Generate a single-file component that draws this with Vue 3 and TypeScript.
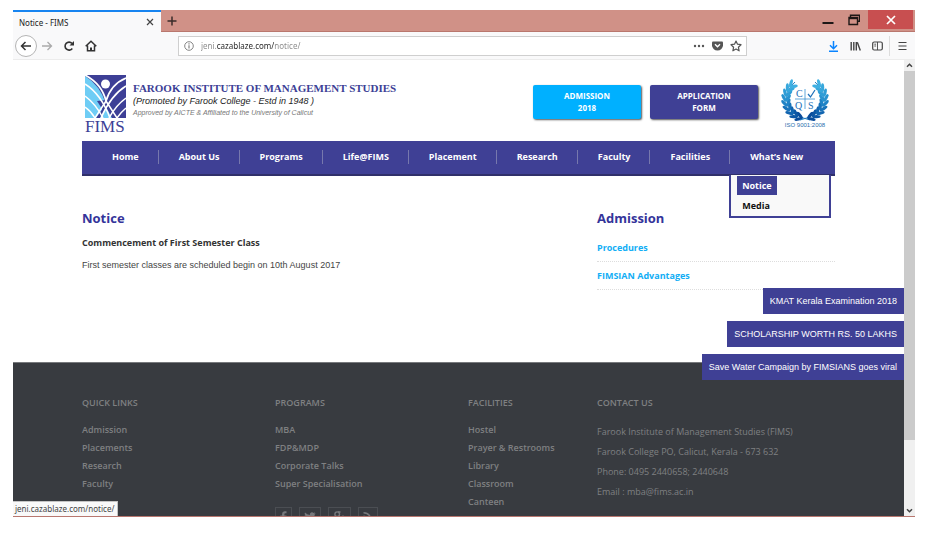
<script setup lang="ts">
import { ref } from 'vue'

interface Leaf { x: number; y: number; r: number; fill: string }

const address = ref('jeni.cazablaze.com/notice/')

const navItems: string[] = ['Home', 'About Us', 'Programs', 'Life@FIMS', 'Placement', 'Research', 'Faculty', 'Facilities']

const footerColumns = [
  { title: 'QUICK LINKS', links: ['Admission', 'Placements', 'Research', 'Faculty'] },
  { title: 'PROGRAMS', links: ['MBA', 'FDP&MDP', 'Corporate Talks', 'Super Specialisation'] },
  { title: 'FACILITIES', links: ['Hostel', 'Prayer & Restrooms', 'Library', 'Classroom', 'Canteen'] },
]

const contactLines: string[] = [
  'Farook Institute of Management Studies (FIMS)',
  'Farook College PO, Calicut, Kerala - 673 632',
  'Phone: 0495 2440658; 2440648',
  'Email : mba@fims.ac.in',
]

const banners: string[] = [
  'KMAT Kerala Examination 2018',
  'SCHOLARSHIP WORTH RS. 50 LAKHS',
  'Save Water Campaign by FIMSIANS goes viral',
]

// Laurel leaves along one side of the wreath, from the foot up to the tip.
const shades = ['#0a4c9b', '#0d57a5', '#1265b0', '#1873ba', '#1f83c6', '#2893d0', '#2f9dd6', '#37a7dc', '#3fb0e2']
const leaves: Leaf[] = []
for (let i = 0; i < 9; i++) {
  const deg = 108 + i * 15
  const a = (deg * Math.PI) / 180
  for (const side of [-1, 1]) {
    const radius = 19 + side * 2
    leaves.push({
      x: 24 + radius * Math.cos(a),
      y: 21 + radius * Math.sin(a),
      r: deg + 90 - side * 32,
      fill: shades[i],
    })
  }
}
</script>

<template>
  <div class="screen">
    <div class="window">
      <div class="titlebar">
        <div class="tab">
          <span>Notice - FIMS</span>
          <button class="icon-btn" aria-label="Close tab">
            <svg width="8" height="8" viewBox="0 0 8 8"><path d="M1 1l6 6M7 1L1 7" stroke="#444" stroke-width="1.2" /></svg>
          </button>
        </div>
        <button class="icon-btn new-tab" aria-label="New tab">
          <svg width="10" height="10" viewBox="0 0 10 10"><path d="M5 0.500v9M0.500 5h9" stroke="#3a2b2a" stroke-width="1.500" /></svg>
        </button>
        <div class="window-controls">
          <button class="icon-btn control" aria-label="Minimize">
            <svg width="12" height="12" viewBox="0 0 12 12"><path d="M0.500 9h11" stroke="#1d1716" stroke-width="2" /></svg>
          </button>
          <button class="icon-btn control" aria-label="Restore">
            <svg width="12" height="12" viewBox="0 0 12 12" fill="none" stroke="#1d1716"><path d="M2.500 3V1.200h9v6H9.500" stroke-width="1.400" /><path d="M1 3.500h8.500v7H1z" stroke-width="1.400" /><path d="M1 4.200h8.500" stroke-width="2" /></svg>
          </button>
          <button class="icon-btn close" aria-label="Close">
            <svg width="10" height="10" viewBox="0 0 10 10"><path d="M1 1l8 8M9 1L1 9" stroke="#fff" stroke-width="1.700" /></svg>
          </button>
        </div>
      </div>

      <div class="toolbar">
        <div class="nav-buttons">
          <button class="icon-btn back" aria-label="Back">
            <svg width="12" height="12" viewBox="0 0 12 12" fill="none" stroke="#333" stroke-width="1.500"><path d="M11 6H1.500M5.500 2l-4 4 4 4" /></svg>
          </button>
          <button class="icon-btn" aria-label="Forward">
            <svg width="12" height="12" viewBox="0 0 12 12" fill="none" stroke="#aaa" stroke-width="1.300"><path d="M1 6h9.500M6.500 2l4 4-4 4" /></svg>
          </button>
          <button class="icon-btn" aria-label="Reload">
            <svg width="12" height="12" viewBox="0 0 12 12"><path d="M9.300 8.500A4 4 0 1 1 9 3.400" fill="none" stroke="#333" stroke-width="1.600" /><path d="M11 1v4.500H6.500z" fill="#333" /></svg>
          </button>
          <button class="icon-btn" aria-label="Home">
            <svg width="12" height="12" viewBox="0 0 12 12" fill="none" stroke="#333" stroke-width="1.500"><path d="M0.700 6.300L6 1.200l5.300 5.100M2.500 5.500v5.300h7V5.500" /><path d="M6 11V7.500" stroke-width="2" /></svg>
          </button>
        </div>
        <div class="address">
          <svg width="10" height="10" viewBox="0 0 10 10" fill="none" stroke="#777"><circle cx="5" cy="5" r="4.300" stroke-width="0.900" /><path d="M5 4.300v3.200M5 2.300v1.100" stroke-width="1.100" /></svg>
          <input v-model="address" type="text" aria-label="Address" spellcheck="false" />
          <button class="icon-btn" aria-label="Page actions">
            <svg width="12" height="4" viewBox="0 0 12 4" fill="#555"><circle cx="2" cy="2" r="1.200" /><circle cx="6" cy="2" r="1.200" /><circle cx="10" cy="2" r="1.200" /></svg>
          </button>
          <button class="icon-btn" aria-label="Save to Pocket">
            <svg width="11" height="10" viewBox="0 0 11 10"><path d="M1 0.500h9q1 0 1 1v2.700a5.500 5.300 0 0 1-11 0V1.500q0-1 1-1z" fill="#555" /><path d="M3 3.300l2.500 2.500L8 3.300" fill="none" stroke="#fff" stroke-width="1.400" /></svg>
          </button>
          <button class="icon-btn" aria-label="Bookmark">
            <svg width="12" height="12" viewBox="0 0 12 12"><path d="M6 1l1.500 3.200 3.500.5-2.600 2.500.7 3.600L6 9l-3.100 1.800.7-3.600L1 4.700l3.500-.5z" fill="none" stroke="#555" stroke-width="1.200" stroke-linejoin="round" /></svg>
          </button>
        </div>
        <div class="tools">
          <button class="icon-btn" aria-label="Downloads">
            <svg width="11" height="12" viewBox="0 0 11 12" fill="none" stroke="#0a84ff" stroke-width="1.500"><path d="M5.500 1v7.500M2 5.200l3.500 3.500L9 5.200M1 11.200h9" /></svg>
          </button>
          <button class="icon-btn" aria-label="Library">
            <svg width="11" height="12" viewBox="0 0 11 12" fill="none" stroke="#444" stroke-width="1.400"><path d="M1.200 2v8.500M3.800 2v8.500M6.300 2v8.500M7.300 2.200l3 8.300" /></svg>
          </button>
          <button class="icon-btn" aria-label="Sidebars">
            <svg width="11" height="12" viewBox="0 0 11 12" fill="none" stroke="#444"><rect x="0.700" y="2" width="9.600" height="8" rx="1.500" stroke-width="1.200" /><path d="M5.500 2v8M2.300 4.200h1.800M2.300 6h1.800" stroke-width="0.900" /></svg>
          </button>
          <span class="divider"></span>
          <button class="icon-btn" aria-label="Open menu">
            <svg width="9" height="12" viewBox="0 0 9 12" stroke="#444" stroke-width="1.200"><path d="M0.500 2.500h8M0.500 6h8M0.500 9.500h8" /></svg>
          </button>
        </div>
      </div>

      <div class="viewport">
        <div class="page">
          <header class="site-header">
            <a href="#" class="logo" aria-label="FIMS">
              <svg width="41" height="43" viewBox="0 0 41 43">
                <rect width="41" height="43" fill="#3d3f96" />
                <path d="M0 1Q15 10 21 29L11 43H0z" fill="#6fcdf5" />
                <path d="M23 43L12 26l9-1 10 18z" fill="#3d3f96" />
                <path d="M15 43l6-11 6 11z" fill="#6fcdf5" />
                <circle cx="20.500" cy="9" r="4.500" fill="#fff" />
                <g fill="none" stroke="#fff" stroke-width="1.500">
                  <path d="M0 0Q17 9 21 26 26 9 41 3" stroke-width="1.700" />
                  <path d="M0 9Q16 19 25 43M0 21Q11 29 18 43M0 32q6 4 10 11" />
                  <path d="M41 11Q26 20 16 43M41 23Q31 30 24 43M41 33q-5 4-9 10" />
                  <path d="M21 26L32 43M21 26L10 43" />
                </g>
              </svg>
              <span>FIMS</span>
            </a>
            <div class="brand">
              <h1>FAROOK INSTITUTE OF MANAGEMENT STUDIES</h1>
              <p class="promoted">(Promoted by Farook College - Estd in 1948 )</p>
              <p class="approved">Approved by AICTE &amp; Affiliated to the University of Calicut</p>
            </div>
            <div class="actions">
              <a href="#" class="cta cta-light">ADMISSION<br />2018</a>
              <a href="#" class="cta">APPLICATION<br />FORM</a>
              <svg class="seal" width="48" height="51" viewBox="0 0 48 51" role="img" aria-label="ISO 9001:2008">
                <g v-for="side in [1, -1]" :key="side" :transform="side === 1 ? '' : 'translate(48 0) scale(-1 1)'">
                  <path d="M29 42Q8 38 5.500 21 6 11 14 4" fill="none" stroke="#1f7fc3" stroke-width="1" />
                  <ellipse
                    v-for="(leaf, i) in leaves"
                    :key="i"
                    rx="4.200"
                    ry="1.600"
                    :fill="leaf.fill"
                    :transform="`translate(${leaf.x} ${leaf.y}) rotate(${leaf.r})`"
                  />
                </g>
                <path d="M24 11v20M14 21h20" stroke="#3a93d0" stroke-width="0.800" />
                <g class="seal-letters"><text x="15" y="19">C</text><text x="14" y="31">Q</text><text x="27" y="31">S</text></g>
                <path d="M27 16l2.500 3 4.500-7" fill="none" stroke="#1b6fb8" stroke-width="1.200" />
                <text x="24" y="49" class="seal-caption">ISO 9001:2008</text>
              </svg>
            </div>
          </header>

          <nav class="site-nav" aria-label="Main">
            <ul class="menu">
              <li v-for="item in navItems" :key="item"><a href="#">{{ item }}</a></li>
              <li>
                <a href="#">What’s New</a>
                <ul class="dropdown">
                  <li><a href="#" class="active">Notice</a></li>
                  <li><a href="#">Media</a></li>
                </ul>
              </li>
            </ul>
          </nav>

          <main class="content">
            <article>
              <h2>Notice</h2>
              <h3>Commencement of First Semester Class</h3>
              <p>First semester classes are scheduled begin on 10th August 2017</p>
            </article>
            <aside>
              <h2>Admission</h2>
              <ul class="side-links">
                <li><a href="#">Procedures</a></li>
                <li><a href="#">FIMSIAN Advantages</a></li>
              </ul>
            </aside>
          </main>

          <footer class="site-footer">
            <section v-for="col in footerColumns" :key="col.title">
              <h4>{{ col.title }}</h4>
              <ul class="footer-links">
                <li v-for="link in col.links" :key="link"><a href="#">{{ link }}</a></li>
              </ul>
              <div v-if="col.title === 'PROGRAMS'" class="social">
                <a href="#" aria-label="Facebook"><svg width="7" height="12" viewBox="0 0 7 12"><path d="M6.500 0.300v2H5.200q-.8 0-.8.8v1.400h2.100l-.3 2.100H4.400V12H2.100V6.600H.3V4.500h1.800V2.800Q2.100.3 4.600.2z" /></svg></a>
                <a href="#" aria-label="Twitter"><svg width="12" height="12" viewBox="0 0 12 12"><path d="M11.800 2.500l-1.200 1.200Q10.500 8.500 7 10 3.200 11.500.2 9.600q2.100.1 3.400-1Q1.900 8.300 1.400 6.900h1Q.7 6.300.6 4.500l1 .3Q.1 3.300 1 1.600q2 2.300 4.900 2.400Q5.600 1.800 7.600 1.200q1.200-.2 2.100.7l1.500-.6-1 1.400z" /></svg></a>
                <a href="#" aria-label="Google Plus"><svg width="13" height="12" viewBox="0 0 13 12" fill="none"><g class="stroked"><circle cx="4.200" cy="3.200" r="2.300" /><path d="M5 1h2.500M4 5.500q0 1 1.500 1.600 2 1.200.8 2.900Q4 12 1.300 10.500 0 8 4.500 7.500M10 4.500v4.600M7.700 6.800h4.600" /></g></svg></a>
                <a href="#" aria-label="RSS feed"><svg width="10" height="12" viewBox="0 0 10 12"><circle cx="1.700" cy="9.800" r="1.400" /><path class="stroked" d="M0.500 5.200q4 0 4.200 5.800M0.500 1.700q7.400.2 7.800 9.300" /></svg></a>
              </div>
            </section>
            <section>
              <h4>CONTACT US</h4>
              <address>
                <p v-for="line in contactLines" :key="line">{{ line }}</p>
              </address>
            </section>
          </footer>

          <div class="banners">
            <a v-for="banner in banners" :key="banner" href="#">{{ banner }}</a>
          </div>
          <div class="status">jeni.cazablaze.com/notice/</div>
        </div>

        <div class="scrollbar">
          <svg width="11" height="11" viewBox="0 0 11 11"><path d="M3 6.800l2.500-2.500L8 6.800" fill="none" stroke="#444" stroke-width="1.500" /></svg>
          <div class="track"><div class="thumb"></div></div>
          <svg width="11" height="11" viewBox="0 0 11 11"><path d="M3 4.300l2.500 2.500L8 4.300" fill="none" stroke="#444" stroke-width="1.500" /></svg>
        </div>
      </div>
    </div>
  </div>
</template>

<style>
body {
  background: #fff;
}
</style>

<style scoped>
* {
  box-sizing: border-box;
}
h1, h2, h3, h4, p, ul {
  margin: 0;
  padding: 0;
}
ul {
  list-style: none;
}
a {
  color: inherit;
  text-decoration: none;
}
svg {
  display: block;
  flex: none;
}
.screen {
  height: 100vh;
  padding: 10px 14px 35px 13px;
  font-family: "Open Sans", sans-serif;
  font-size: 9px;
}
.window {
  display: flex;
  flex-direction: column;
  height: 100%;
  border-bottom: 1px solid #b8776f;
}
.icon-btn {
  display: flex;
  align-items: center;
  justify-content: center;
  padding: 0;
  border: 0;
  background: none;
}

/* Browser chrome */
.titlebar {
  display: flex;
  flex: none;
  height: 22px;
  background: #d09187;
  box-shadow: inset 0 -1px #b9776e;
}
.tab {
  display: flex;
  align-items: center;
  justify-content: space-between;
  width: 148px;
  padding: 0 7px 0 6px;
  border-top: 2px solid #1784f0;
  background: #f9f9fa;
  color: #222;
  font-family: "Noto Sans", sans-serif;
  font-size: 8px;
}
.new-tab {
  width: 22px;
}
.window-controls {
  display: flex;
  align-items: flex-start;
  margin-left: auto;
  padding-right: 2px;
}
.control {
  width: 26px;
  height: 19px;
}
.close {
  width: 45px;
  height: 19px;
  margin-left: 1px;
  background: #c84f50;
}
.toolbar {
  display: flex;
  flex: none;
  align-items: center;
  height: 28px;
  background: #f9f9fa;
  border-bottom: 1px solid #ececec;
}
.nav-buttons {
  display: flex;
  align-items: center;
  gap: 10px;
  width: 165px;
  padding-left: 2px;
}
.back {
  width: 22px;
  height: 22px;
  margin-right: -6px;
  border: 1px solid #b5b5b5;
  border-radius: 50%;
  background: #fff;
}
.address {
  display: flex;
  flex: 1;
  align-items: center;
  gap: 7px;
  height: 20px;
  padding: 0 4px 0 5px;
  border: 1px solid #cfcfcf;
  background: #fff;
}
.address input {
  flex: 1;
  min-width: 0;
  height: 18px;
  padding: 0;
  border: 0;
  outline: 0;
  background: linear-gradient(90deg, #888 16px, #222 16px 73px, #888 73px);
  background-clip: text;
  -webkit-background-clip: text;
  color: transparent;
  caret-color: #222;
  font-family: "Noto Sans", sans-serif;
  font-size: 8px;
}
.tools {
  display: flex;
  align-items: center;
  gap: 11px;
  width: 168px;
  padding-right: 8px;
  justify-content: flex-end;
}
.divider {
  width: 1px;
  height: 20px;
  margin: 0 -3px 0 -5px;
  background: #ddd;
}

/* Page */
.viewport {
  display: flex;
  flex: 1;
  min-height: 0;
}
.page {
  position: relative;
  display: flex;
  flex: 1;
  flex-direction: column;
  overflow: hidden;
}
.site-header {
  display: flex;
  flex: none;
  height: 81px;
  padding: 15px 75px 0 72px;
}
.logo {
  width: 42px;
  color: #3d3f96;
  font-family: "Liberation Serif", serif;
  font-size: 17px;
  line-height: 17px;
}
.brand {
  padding: 6px 0 0 6px;
}
.brand h1 {
  color: #3d3f96;
  font-family: "Liberation Serif", serif;
  font-size: 11px;
  line-height: 15px;
  white-space: nowrap;
}
.promoted,
.approved {
  font-family: "Liberation Sans", sans-serif;
  font-style: italic;
}
.promoted {
  color: #222;
  font-size: 9px;
  line-height: 11px;
}
.approved {
  color: #777;
  font-size: 7px;
  line-height: 12px;
}
.actions {
  display: flex;
  align-items: flex-start;
  gap: 9px;
  margin-left: auto;
}
.cta {
  width: 108px;
  margin-top: 10px;
  padding: 5px 0;
  border-radius: 2px;
  background: #3f4095;
  box-shadow: 1px 1px 2px #555;
  color: #fff;
  font-size: 8px;
  font-weight: 700;
  line-height: 12px;
  text-align: center;
}
.cta-light {
  background: #00b0ff;
}
.seal {
  margin-top: 3px;
  margin-left: 14px;
}
.seal-letters {
  fill: #1b6fb8;
  font-family: "Liberation Serif", serif;
  font-size: 10px;
}
.seal-caption {
  fill: #2a6fae;
  font-family: "Liberation Sans", sans-serif;
  font-size: 6px;
  text-anchor: middle;
}
.site-nav {
  flex: none;
  height: 35px;
  margin: 0 69px;
  padding: 0 10px;
  border-bottom: 2px solid #30306a;
  background: #3f4095;
}
.menu {
  display: flex;
}
.menu > li {
  position: relative;
  padding: 9px 0;
}
.menu > li > a {
  display: block;
  padding: 0 19px 0 20px;
  color: #fff;
  font-weight: 700;
  line-height: 14px;
  white-space: nowrap;
}
.menu > li + li > a {
  border-left: 1px solid #7778ad;
}
.dropdown {
  position: absolute;
  top: 34px;
  left: 0;
  z-index: 2;
  width: 102px;
  padding: 1px 0 0 6px;
  border: 2px solid #3f4095;
  border-top: 0;
  background: #f9f9f9;
  color: #111;
  font-weight: 700;
}
.dropdown a {
  display: inline-block;
  padding: 0 5px;
  line-height: 19px;
}
.dropdown li {
  height: 20px;
}
.dropdown .active {
  background: #3f4095;
  color: #fff;
}
.content {
  display: grid;
  flex: none;
  grid-template-columns: 515fr 238fr;
  min-height: 186px;
  padding: 32px 69px 0;
}
.content h2 {
  color: #34349a;
  font-size: 13px;
  font-weight: 700;
  line-height: 20px;
}
.content h3 {
  margin-top: 8px;
  color: #333;
  font-size: 9px;
  line-height: 14px;
}
.content p {
  margin-top: 8px;
  color: #444;
  font-family: "Liberation Sans", sans-serif;
  font-size: 9px;
  line-height: 14px;
}
.side-links {
  margin-top: 6px;
}
.side-links li {
  padding: 7px 0;
  border-bottom: 1px dotted #ddd;
  color: #12aef5;
  font-weight: 700;
  line-height: 13px;
}
.site-footer {
  display: grid;
  flex: 1 0 auto;
  grid-template-columns: 193fr 193fr 129fr 238fr;
  padding: 34px 69px 0;
  border-top: 1px solid #77797c;
  background: #383b40;
  color: #7f8082;
}
.site-footer h4 {
  font-size: 9px;
  font-weight: 600;
  line-height: 12px;
}
.footer-links {
  margin-top: 12px;
  font-size: 9px;
  font-weight: 600;
  line-height: 18px;
}
.site-footer address {
  margin-top: 13px;
  font-size: 9px;
  font-style: normal;
  line-height: 20px;
}
.social {
  display: flex;
  gap: 7px;
  margin-top: 14px;
}
.social a {
  padding: 3px 4px;
  border: 1px solid #4b4e53;
}
.social svg {
  fill: #77797c;
}
.social .stroked {
  fill: none;
  stroke: #77797c;
  stroke-width: 1.400;
}
.banners {
  position: absolute;
  top: 228px;
  right: 0;
  display: flex;
  flex-direction: column;
  align-items: flex-end;
  gap: 7px;
}
.banners a {
  padding: 6px 7px;
  background: #3f4095;
  color: #fff;
  font-family: "Liberation Sans", sans-serif;
  font-size: 9px;
  line-height: 14px;
}
.status {
  position: absolute;
  bottom: 0;
  left: 0;
  padding: 0 3px 0 2px;
  border-top: 1px solid #c4c4c4;
  border-right: 1px solid #c4c4c4;
  background: #f9f9f9;
  color: #444;
  font-family: "Noto Sans", sans-serif;
  font-size: 8px;
  line-height: 14px;
}
.scrollbar {
  display: flex;
  flex: none;
  flex-direction: column;
  width: 11px;
  background: #f0f0f0;
}
.track {
  flex: 1;
}
.thumb {
  height: 85%;
  background: #cbcbcb;
}
</style>
